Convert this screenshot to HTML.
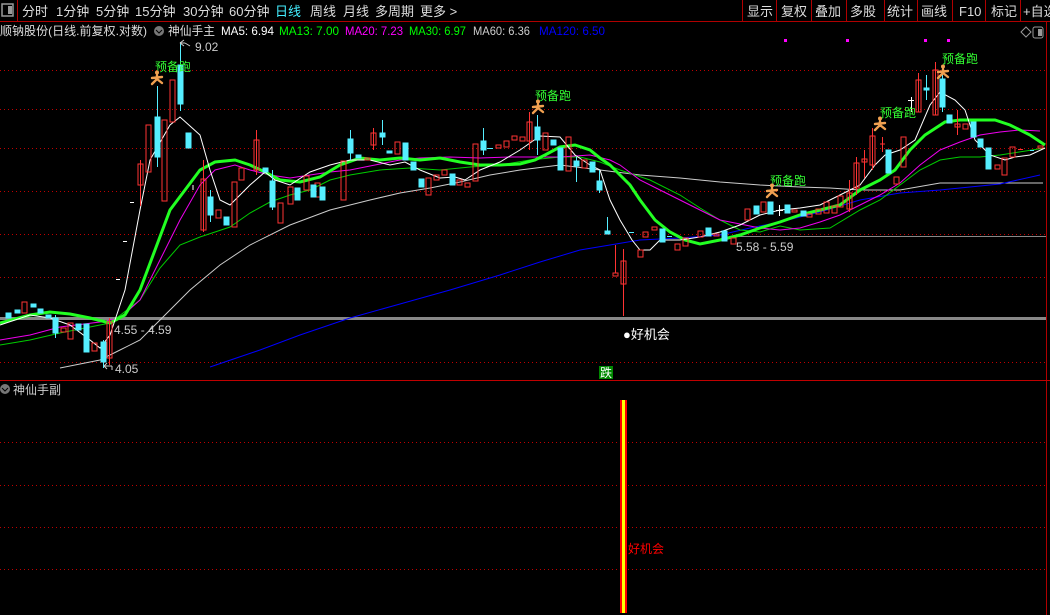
<!DOCTYPE html>
<html><head><meta charset="utf-8"><style>
body{margin:0;background:#000;width:1050px;height:615px;overflow:hidden;font-family:"Liberation Sans","Noto Sans CJK SC",sans-serif}
svg{position:absolute;left:0;top:0}
</style></head><body>
<svg width="1050" height="615" viewBox="0 0 1050 615" font-family="Liberation Sans, Noto Sans CJK SC, sans-serif">
<rect width="1050" height="615" fill="#000"/>
<!-- top bar -->
<line x1="0" y1="21.5" x2="1050" y2="21.5" stroke="#b00000"/>
<line x1="17.5" y1="0" x2="17.5" y2="21" stroke="#b00000"/>
<rect x="2" y="4" width="11" height="12" fill="none" stroke="#999" stroke-width="1.5"/><rect x="8" y="6" width="4" height="8" fill="#999"/>
<g font-size="13" fill="#ddd">
<text x="22" y="16">分时</text><text x="56" y="16">1分钟</text><text x="96" y="16">5分钟</text><text x="135" y="16">15分钟</text><text x="183" y="16">30分钟</text><text x="229" y="16">60分钟</text>
<text x="275" y="16" fill="#4ef">日线</text><text x="310" y="16">周线</text><text x="343" y="16">月线</text><text x="375" y="16">多周期</text><text x="420" y="16">更多 &gt;</text>
<text x="747" y="16">显示</text><text x="781" y="16">复权</text><text x="815" y="16">叠加</text><text x="850" y="16">多股</text><text x="887" y="16">统计</text><text x="921" y="16">画线</text><text x="959" y="16">F10</text><text x="991" y="16">标记</text><text x="1023" y="16">+自选</text>
</g>
<g stroke="#b00000"><line x1="742.5" y1="0" x2="742.5" y2="21"/><line x1="776.5" y1="0" x2="776.5" y2="21"/><line x1="811.5" y1="0" x2="811.5" y2="21"/><line x1="846.5" y1="0" x2="846.5" y2="21"/><line x1="884.5" y1="0" x2="884.5" y2="21"/><line x1="917.5" y1="0" x2="917.5" y2="21"/><line x1="952.5" y1="0" x2="952.5" y2="21"/><line x1="985.5" y1="0" x2="985.5" y2="21"/><line x1="1020.5" y1="0" x2="1020.5" y2="21"/>
<line x1="1046.5" y1="21" x2="1046.5" y2="615"/></g>
<!-- info line -->
<g font-size="12">
<text x="0" y="35" fill="#ddd" textLength="147" lengthAdjust="spacingAndGlyphs">顺钠股份(日线.前复权.对数)</text>
<circle cx="159" cy="31" r="5" fill="#777"/><path d="M156 30l3 3 3-3" stroke="#000" fill="none"/>
<text x="168" y="35" fill="#ddd" textLength="47" lengthAdjust="spacingAndGlyphs">神仙手主</text>
<text x="221" y="35" fill="#fff" textLength="53" lengthAdjust="spacingAndGlyphs">MA5: 6.94</text>
<text x="279" y="35" fill="#0f0" textLength="60" lengthAdjust="spacingAndGlyphs">MA13: 7.00</text>
<text x="345" y="35" fill="#f0f" textLength="58" lengthAdjust="spacingAndGlyphs">MA20: 7.23</text>
<text x="409" y="35" fill="#0f0" textLength="57" lengthAdjust="spacingAndGlyphs">MA30: 6.97</text>
<text x="473" y="35" fill="#ccc" textLength="57" lengthAdjust="spacingAndGlyphs">MA60: 6.36</text>
<text x="539" y="35" fill="#00f" textLength="66" lengthAdjust="spacingAndGlyphs">MA120: 6.50</text>
</g>
<path d="M1021 32l5-5 5 5-5 5z" fill="none" stroke="#999"/>
<rect x="1033" y="27" width="10" height="11" rx="2" fill="none" stroke="#999"/><rect x="1038" y="29" width="4" height="7" fill="#999"/>
<g fill="#f0f"><rect x="784" y="39" width="3" height="3"/><rect x="846" y="39" width="3" height="3"/><rect x="924" y="39" width="3" height="3"/><rect x="947" y="39" width="3" height="3"/></g>
<!-- grid -->
<g stroke="#c00000" stroke-dasharray="1,3">
<line x1="0" y1="70.5" x2="1046" y2="70.5"/><line x1="0" y1="109.5" x2="1046" y2="109.5"/><line x1="0" y1="148.5" x2="1046" y2="148.5"/><line x1="0" y1="191.5" x2="1046" y2="191.5"/><line x1="0" y1="234.5" x2="1046" y2="234.5"/><line x1="0" y1="277.5" x2="1046" y2="277.5"/><line x1="0" y1="362.5" x2="1046" y2="362.5"/>
<line x1="0" y1="442.5" x2="1046" y2="442.5"/><line x1="0" y1="485.5" x2="1046" y2="485.5"/><line x1="0" y1="527.5" x2="1046" y2="527.5"/><line x1="0" y1="569.5" x2="1046" y2="569.5"/>
</g>
<rect x="0" y="317" width="1046" height="3" fill="#888"/>
<line x1="730" y1="236.5" x2="1046" y2="236.5" stroke="#888"/>
<line x1="0" y1="380.5" x2="1050" y2="380.5" stroke="#c00000"/>
<!-- MAs -->
<g fill="none">
<polyline stroke="#ccc" stroke-width="1" points="60,368 90,362 100,360 120,350 140,340 160,320 190,290 220,265 250,245 290,225 330,210 370,200 400,193 430,188 460,182 490,175 520,170 560,165 600,170 640,175 680,178 720,182 760,185 800,187 830,188 860,190 900,190 940,183 980,183 1043,183"/>
<polyline stroke="#00f" stroke-width="1" points="210,367 260,350 300,335 350,318 400,304 450,290 500,275 540,262 580,250 610,245 640,240 680,238 720,235 750,228 780,222 820,212 860,200 900,193 940,190 980,186 1000,184 1040,175"/>
<polyline stroke="#0c0" stroke-width="1" points="0,345 30,340 60,333 100,325 110,323 140,300 160,268 180,245 200,237 230,227 250,213 270,202 290,195 310,190 330,180 350,175 380,170 410,168 440,170 470,167 500,165 530,160 560,157 580,157 600,162 620,170 650,180 680,195 700,208 720,220 740,230 760,232 780,226 800,230 830,228 860,210 880,200 900,185 920,170 940,160 960,157 980,157 1000,155 1045,148"/>
<polyline stroke="#e0e" stroke-width="1" points="0,340 30,335 60,327 100,322 120,318 140,300 160,260 180,220 200,185 215,170 235,165 250,170 270,175 290,178 310,175 330,172 350,170 370,166 400,160 420,158 450,157 480,158 510,157 530,157 560,157 590,155 610,160 620,165 640,180 660,190 680,200 700,210 720,220 740,224 760,228 780,230 800,228 820,222 840,215 860,205 880,195 900,183 920,165 940,150 960,142 980,135 1000,132 1020,130 1040,131"/>
<polyline stroke="#2f2" stroke-width="3" points="0,323 30,315 50,312 70,314 90,318 110,323 125,315 140,290 155,250 170,210 185,190 200,170 215,162 235,160 250,165 265,172 280,180 300,182 320,177 340,165 360,158 380,160 400,158 420,160 440,158 460,162 480,165 500,165 520,164 535,160 545,155 560,147 575,145 590,150 600,158 610,165 620,175 630,185 640,200 655,220 670,232 685,240 700,244 720,240 740,235 760,228 780,222 800,215 820,210 840,205 860,190 880,180 895,170 910,150 925,135 945,122 960,120 975,120 995,120 1010,125 1030,135 1045,145"/>
<polyline stroke="#fff" stroke-width="1" points="0,325 30,315 50,318 70,325 90,340 100,348 110,335 125,290 140,210 150,160 170,125 180,117 200,135 210,170 220,200 230,205 250,185 265,172 275,180 290,185 310,172 330,165 350,160 370,160 390,165 405,162 420,170 440,178 455,177 465,180 480,170 500,162 520,150 540,136 560,137 575,155 590,165 600,170 610,200 620,220 632,240 640,250 650,250 660,240 680,240 700,237 720,232 740,225 760,215 780,210 800,208 820,205 840,195 860,185 875,165 885,155 900,150 915,140 930,105 940,92 955,100 965,110 975,140 990,155 1005,160 1015,157 1030,155 1045,148"/>
</g>
<!-- candles: red hollow -->
<g fill="none" stroke="#f33" stroke-width="1">
<rect x="22" y="302" width="5" height="11"/><rect x="61" y="328" width="5" height="4"/><rect x="68" y="323" width="5" height="16"/><rect x="92" y="343" width="5" height="8"/><rect x="107" y="322" width="5" height="36"/><line x1="109.5" y1="318" x2="109.5" y2="365"/>
<rect x="138" y="164" width="5" height="21"/><line x1="140.5" y1="160" x2="140.5" y2="206"/>
<rect x="146" y="125" width="5" height="47"/><rect x="162" y="120" width="5" height="81"/><rect x="170" y="80" width="5" height="42"/>
<rect x="201" y="179" width="5" height="51"/><line x1="203.5" y1="160" x2="203.5" y2="232"/><rect x="216" y="210" width="5" height="8"/><rect x="232" y="182" width="5" height="45"/>
<rect x="239" y="168" width="5" height="12"/><rect x="254" y="140" width="5" height="30"/><line x1="256.5" y1="130" x2="256.5" y2="175"/><rect x="278" y="203" width="5" height="20"/><rect x="288" y="187" width="5" height="17"/>
<rect x="304" y="176" width="5" height="14"/><rect x="315" y="183" width="5" height="14"/><rect x="341" y="161" width="5" height="39"/><rect x="365" y="158" width="5" height="2"/><rect x="371" y="133" width="5" height="12"/><line x1="373.5" y1="128" x2="373.5" y2="150"/>
<rect x="395" y="142" width="5" height="12"/><rect x="426" y="178" width="5" height="17"/><rect x="434" y="175" width="5" height="5"/><rect x="442" y="170" width="5" height="5"/>
<rect x="457" y="180" width="5" height="5"/><rect x="465" y="183" width="5" height="4"/><rect x="473" y="144" width="5" height="37"/>
<rect x="496" y="145" width="5" height="3"/><rect x="504" y="141" width="5" height="6"/><rect x="512" y="136" width="5" height="4"/><rect x="520" y="137" width="5" height="4"/><rect x="527" y="122" width="5" height="19"/><line x1="529.5" y1="112" x2="529.5" y2="150"/>
<rect x="543" y="133" width="5" height="17"/><rect x="566" y="137" width="5" height="34"/><rect x="582" y="160" width="5" height="8"/>
<rect x="613" y="273" width="5" height="3"/><line x1="615.5" y1="245" x2="615.5" y2="273"/><rect x="621" y="261" width="5" height="23"/><line x1="623.5" y1="249" x2="623.5" y2="316"/>
<rect x="638" y="250" width="5" height="7"/><rect x="643" y="232" width="5" height="5"/><rect x="652" y="227" width="5" height="3"/><rect x="675" y="244" width="5" height="6"/><rect x="683" y="238" width="5" height="8"/>
<rect x="698" y="231" width="5" height="6"/><rect x="714" y="234" width="5" height="2"/><rect x="731" y="238" width="5" height="6"/>
<rect x="745" y="209" width="5" height="11"/><rect x="761" y="202" width="5" height="10"/><rect x="792" y="210" width="5" height="2"/><rect x="807" y="214" width="5" height="3"/><rect x="816" y="209" width="5" height="5"/><rect x="824" y="202" width="5" height="11"/>
<rect x="832" y="206" width="5" height="7"/><rect x="838" y="196" width="5" height="11"/><rect x="847" y="193" width="5" height="16"/><line x1="849.5" y1="180" x2="849.5" y2="212"/><rect x="854" y="163" width="5" height="25"/><line x1="856.5" y1="157" x2="856.5" y2="195"/>
<rect x="862" y="159" width="5" height="3"/><line x1="864.5" y1="150" x2="864.5" y2="178"/><rect x="870" y="136" width="5" height="29"/><line x1="872.5" y1="128" x2="872.5" y2="170"/><line x1="880" y1="144" x2="885" y2="144"/><line x1="882.5" y1="137" x2="882.5" y2="152"/>
<rect x="894" y="177" width="5" height="7"/><rect x="901" y="137" width="5" height="30"/><rect x="916" y="80" width="5" height="32"/><line x1="918.5" y1="73" x2="918.5" y2="112"/><rect x="933" y="70" width="5" height="45"/><line x1="935.5" y1="62" x2="935.5" y2="115"/>
<rect x="955" y="124" width="5" height="3"/><line x1="957.5" y1="110" x2="957.5" y2="135"/><rect x="963" y="124" width="5" height="5"/><rect x="995" y="165" width="5" height="4"/><rect x="1002" y="158" width="5" height="17"/><rect x="1010" y="147" width="5" height="10"/><line x1="1018" y1="149.5" x2="1023" y2="149.5"/><rect x="1038" y="146" width="5" height="2"/>
</g>
<!-- cyan filled -->
<g fill="#5ef" stroke="#5ef" stroke-width="1">
<rect x="6" y="313" width="5" height="5"/><rect x="15" y="310" width="5" height="3"/><rect x="31" y="304" width="5" height="3"/><rect x="38" y="309" width="5" height="4"/><rect x="46" y="315" width="5" height="3"/>
<rect x="53" y="318" width="5" height="15"/><line x1="55.5" y1="315" x2="55.5" y2="338"/><rect x="76" y="324" width="5" height="6"/><rect x="84" y="324" width="5" height="28"/><rect x="101" y="342" width="5" height="20"/><line x1="103.5" y1="340" x2="103.5" y2="368"/>
<rect x="155" y="117" width="5" height="40"/><line x1="157.5" y1="86" x2="157.5" y2="167"/><rect x="178" y="65" width="5" height="39"/><line x1="180.5" y1="42" x2="180.5" y2="111"/><rect x="186" y="133" width="5" height="15"/>
<rect x="208" y="197" width="5" height="18"/><line x1="210.5" y1="190" x2="210.5" y2="222"/><rect x="224" y="217" width="5" height="8"/><rect x="263" y="168" width="5" height="4"/><rect x="270" y="181" width="5" height="26"/><line x1="272.5" y1="170" x2="272.5" y2="210"/>
<rect x="295" y="188" width="5" height="12"/><rect x="311" y="185" width="5" height="12"/><rect x="320" y="187" width="5" height="13"/><rect x="348" y="139" width="5" height="14"/><line x1="350.5" y1="130" x2="350.5" y2="160"/><rect x="356" y="155" width="5" height="3"/>
<rect x="380" y="133" width="5" height="4"/><line x1="382.5" y1="120" x2="382.5" y2="145"/><rect x="387" y="151" width="5" height="2"/><rect x="403" y="143" width="5" height="17"/><rect x="411" y="162" width="5" height="8"/><rect x="419" y="179" width="5" height="8"/><rect x="450" y="174" width="5" height="11"/>
<rect x="481" y="141" width="5" height="9"/><line x1="483.5" y1="128" x2="483.5" y2="155"/><line x1="487" y1="148.5" x2="493" y2="148.5"/><rect x="535" y="127" width="5" height="13"/><line x1="537.5" y1="115" x2="537.5" y2="155"/>
<rect x="551" y="140" width="5" height="5"/><rect x="558" y="148" width="5" height="22"/><rect x="574" y="161" width="5" height="5"/><line x1="576.5" y1="157" x2="576.5" y2="182"/><rect x="590" y="162" width="5" height="10"/><rect x="597" y="181" width="5" height="9"/><line x1="599.5" y1="170" x2="599.5" y2="193"/>
<rect x="605" y="231" width="5" height="3"/><line x1="607.5" y1="217" x2="607.5" y2="231"/><line x1="629" y1="232.5" x2="634" y2="232.5"/><rect x="660" y="229" width="5" height="13"/><line x1="667" y1="236.5" x2="672" y2="236.5"/>
<rect x="706" y="228" width="5" height="8"/><rect x="722" y="231" width="5" height="10"/><rect x="754" y="206" width="5" height="8"/><rect x="768" y="202" width="5" height="12"/><rect x="785" y="205" width="5" height="8"/><rect x="801" y="211" width="5" height="5"/>
<rect x="886" y="150" width="5" height="23"/><rect x="924" y="88" width="5" height="2"/><line x1="926.5" y1="75" x2="926.5" y2="100"/><rect x="940" y="79" width="5" height="28"/><line x1="942.5" y1="72" x2="942.5" y2="112"/><rect x="947" y="115" width="5" height="8"/>
<rect x="971" y="122" width="5" height="15"/><rect x="978" y="139" width="5" height="8"/><rect x="986" y="148" width="5" height="21"/><line x1="1030" y1="150.5" x2="1034" y2="150.5"/>
</g>
<g stroke="#fff"><line x1="776" y1="210.5" x2="783" y2="210.5"/><line x1="779.5" y1="205" x2="779.5" y2="216"/><line x1="908" y1="100.5" x2="914" y2="100.5"/><line x1="911.5" y1="97" x2="911.5" y2="112"/><line x1="130" y1="202.5" x2="134" y2="202.5"/><line x1="123" y1="241.5" x2="127" y2="241.5"/><line x1="116" y1="279.5" x2="120" y2="279.5"/><line x1="193" y1="185" x2="193" y2="190"/></g>
<!-- labels -->
<g font-size="12" fill="#3f3"><text x="155" y="71">预备跑</text><text x="535" y="100">预备跑</text><text x="770" y="185">预备跑</text><text x="880" y="117">预备跑</text><text x="942" y="63">预备跑</text></g>
<g fill="#f0a050" stroke="#f0a050" stroke-width="2.4" stroke-linecap="round">
<circle cx="157" cy="72.5" r="2" stroke="none"/><path d="M157 75v4l-5 5M157 79l5 4M152 78l10-1" fill="none"/>
<circle cx="538" cy="101.5" r="2" stroke="none"/><path d="M538 104v4l-5 5M538 108l5 4M533 107l10-1" fill="none"/>
<circle cx="772" cy="185.5" r="2" stroke="none"/><path d="M772 188v4l-5 5M772 192l5 4M767 191l10-1" fill="none"/>
<circle cx="880" cy="118.5" r="2" stroke="none"/><path d="M880 121v4l-5 5M880 125l5 4M875 124l10-1" fill="none"/>
<circle cx="943" cy="66.5" r="2" stroke="none"/><path d="M943 69v4l-5 5M943 73l5 4M938 72l10-1" fill="none"/>
</g>
<g font-size="12" fill="#ccc">
<path d="M180 43h5M180 43l4-3M180 43l4 3M185 43l5 3" stroke="#ccc" fill="none"/><text x="195" y="51">9.02</text>
<text x="114" y="334">4.55 - 4.59</text>
<path d="M104 366h8M104 366l3-3M104 366l3 3M112 366v4" stroke="#ccc" fill="none"/><text x="115" y="373">4.05</text>
<text x="736" y="251">5.58 - 5.59</text>
</g>
<text x="623" y="339" font-size="13" fill="#fff">●好机会</text>
<rect x="599" y="366" width="14" height="13" fill="#080"/><text x="600" y="377" font-size="12" fill="#fff">跌</text>
<!-- sub panel -->
<circle cx="5" cy="389" r="5" fill="#777"/><path d="M2 388l3 3 3-3" stroke="#000" fill="none"/>
<text x="13" y="394" font-size="12" fill="#ccc">神仙手副</text>
<rect x="620" y="400" width="7" height="213" fill="#f00"/><rect x="622" y="400" width="3" height="213" fill="#ff0"/>
<text x="628" y="553" font-size="12" fill="#f00">好机会</text>
</svg>
</body></html>
